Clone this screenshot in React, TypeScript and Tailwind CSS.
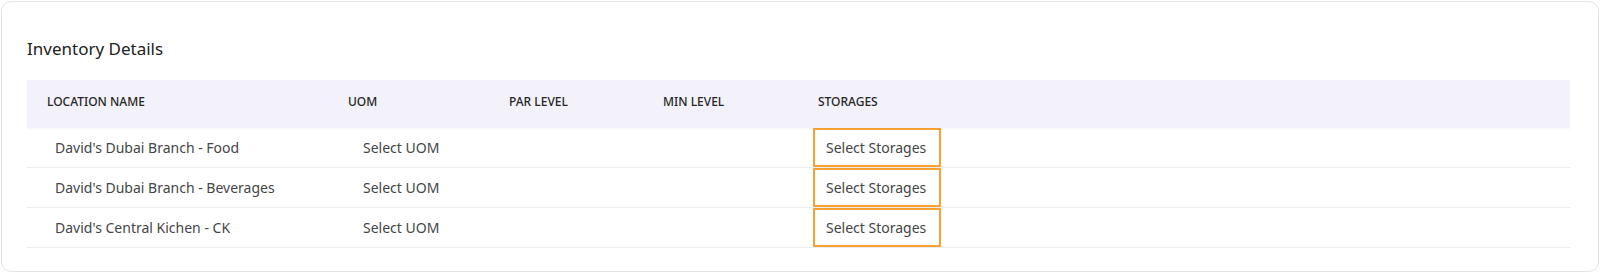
const rows = [
  "David's Dubai Branch - Food",
  "David's Dubai Branch - Beverages",
  "David's Central Kichen - CK",
]

const cols = "grid grid-cols-[301px_161px_154px_155px_1fr]"

export default function App() {
  return (
    <div className="w-[1600px] h-[275px] bg-white p-px font-['Noto_Sans',sans-serif]">
      <div className="h-[271px] rounded-[10px] border border-[#e3e3e8] bg-white pl-[25px] pr-[28px] pt-[35px]">
        <h2 className="text-[17px] leading-[24px] text-[#222] mb-[19px]">Inventory Details</h2>

        {/* header */}
        <div
          className={`${cols} h-[48px] items-center pb-[4px] bg-[#f3f2fb] shadow-[0_1px_2px_rgba(0,0,0,0.04)] text-[12px] font-medium uppercase text-[#262626]`}
        >
          <div className="pl-[20px]">Location Name</div>
          <div className="pl-[20px]">UOM</div>
          <div className="pl-[20px]">Par Level</div>
          <div className="pl-[20px]">Min Level</div>
          <div className="pl-[20px]">Storages</div>
        </div>

        {/* rows */}
        {rows.map((name) => (
          <div
            key={name}
            className={`${cols} h-[40px] items-center border-b border-[#ececef] text-[14px] text-[#454545] whitespace-nowrap`}
          >
            <div className="pl-[28px]">{name}</div>
            <div className="pl-[35px]">Select UOM</div>
            <div />
            <div />
            <div className="pl-[15px] h-full">
              <div className="w-[128px] h-full flex items-center border-2 border-[#f7a133] px-[11px]">
                Select Storages
              </div>
            </div>
          </div>
        ))}
      </div>
    </div>
  )
}
